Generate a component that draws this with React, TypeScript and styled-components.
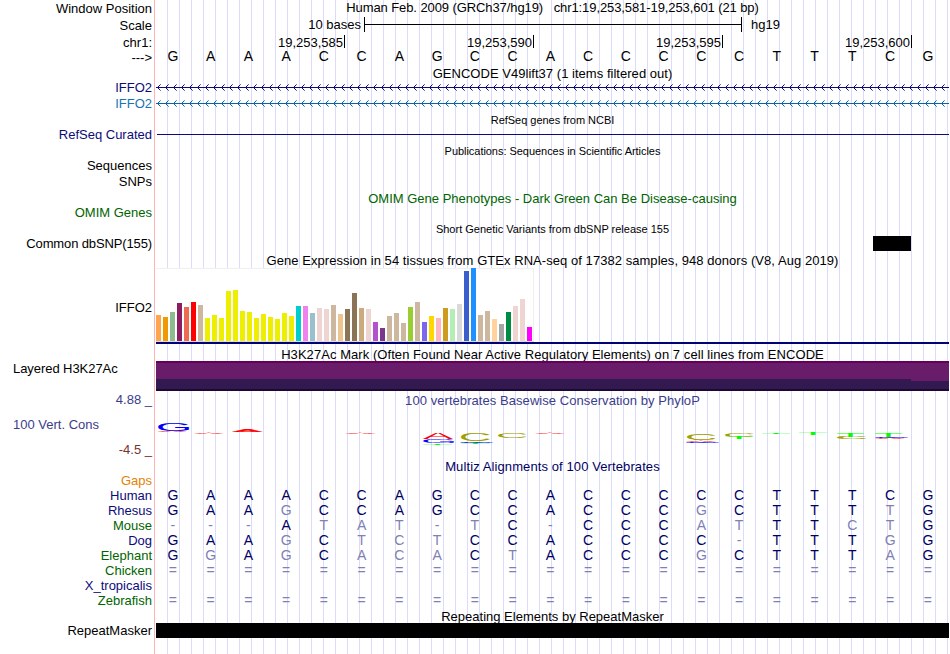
import React from "react";
import styled, { createGlobalStyle } from "styled-components";

const GlobalStyle = createGlobalStyle`
  body {
    margin: 0;
    background: #fff;
  }
`;

const NAVY = "#0c0c78";
const BLUE = "#1874b4";
const GREEN = "#006400";

interface Bar {
  height: number;
  color: string;
}

const tissues: Bar[] = [
  [26, "#ffa54f"], [24, "#ee9a00"], [29, "#8fbc8f"], [38, "#8b1c62"],
  [34, "#ee6a50"], [39, "#ff0000"], [36, "#cdb79e"], [23, "#eeee00"],
  [26, "#eeee00"], [23, "#eeee00"], [50, "#eeee00"], [51, "#eeee00"],
  [30, "#eeee00"], [29, "#eeee00"], [23, "#eeee00"], [27, "#eeee00"],
  [24, "#eeee00"], [22, "#eeee00"], [28, "#eeee00"], [25, "#eeee00"],
  [35, "#00cdcd"], [35, "#ee82ee"], [28, "#9ac0cd"], [33, "#eed5d2"],
  [32, "#eed5d2"], [36, "#cdb79e"], [27, "#eec591"], [32, "#8b7355"],
  [48, "#8b7355"], [33, "#cdaa7d"], [32, "#eed5d2"], [19, "#b452cd"],
  [13, "#7a378b"], [25, "#cdb79e"], [28, "#cdb79e"], [18, "#cdb79e"],
  [34, "#9acd32"], [39, "#cdb79e"], [19, "#7a67ee"], [25, "#ffd700"],
  [23, "#ffb6c1"], [33, "#cd9b1d"], [32, "#b4eeb4"], [37, "#d9d9d9"],
  [70, "#3a5fcd"], [73, "#1e90ff"], [26, "#cdb79e"], [30, "#cdb79e"],
  [22, "#ffd39b"], [17, "#a6a6a6"], [29, "#008b45"], [35, "#eed5d2"],
  [42, "#eed5d2"], [14, "#ff00ff"],
].map(([height, color]) => ({ height: Number(height), color: String(color) }));

// lower case marks a base that differs from human
const species = [
  { name: "Human", color: NAVY, bases: "GAAACCAGCCACCCCCTTTCG" },
  { name: "Rhesus", color: NAVY, bases: "GAAgCCAGCCACCCgCTTTtG" },
  { name: "Mouse", color: GREEN, bases: "---Atat-tC-CCCatTTctG" },
  { name: "Dog", color: NAVY, bases: "GAAgCtctCCACCCC-TTTgG" },
  { name: "Elephant", color: GREEN, bases: "GgAgCacaCtACCCgCTTTaG" },
  { name: "Chicken", color: GREEN, bases: "=====================" },
  { name: "X_tropicalis", color: NAVY, bases: "" },
  { name: "Zebrafish", color: GREEN, bases: "=====================" },
];

// ink box of each glyph, for a 100px font
const ink: any = {
  A: { left: 0.3, width: 66, height: 69 },
  C: { left: 5, width: 64, height: 71 },
  G: { left: 5, width: 66, height: 71 },
  T: { left: 2, width: 57, height: 69 },
};

const baseColor: any = { A: "#ff0000", C: "#a0a000", G: "#0000ff", T: "#00ff00" };

// [base, x, top, width, height]
const logo: [string, number, number, number, number][] = [
  ["G", 2, 423, 31, 8], ["A", 2, 431, 28, 1],
  ["A", 39, 433, 28, 1], ["A", 77, 430, 29, 2],
  ["A", 190, 433, 29, 1],
  ["A", 267, 433, 30, 6], ["G", 267, 439, 31, 4], ["T", 267, 443, 29, 1.5],
  ["C", 305, 433, 29, 8], ["G", 305, 441.5, 31, 1.5], ["T", 305, 443, 29, 1],
  ["C", 342, 433, 29, 5], ["A", 380, 433, 28, 1],
  ["C", 531, 433, 29, 7], ["A", 531, 440, 28, 1.5], ["G", 531, 442, 31, 1],
  ["C", 569, 433, 29, 4], ["T", 569, 437, 28, 2],
  ["T", 606, 433, 28, 1], ["T", 643, 433, 28, 2],
  ["T", 681, 433, 27, 4], ["C", 682, 437, 28, 2],
  ["T", 719, 433, 27, 4], ["G", 720, 437, 31, 1], ["A", 720, 438, 28, 1],
];

const Bases = ({ bases, plain = false }: any) => (
  <BaseGrid>
    {bases.split("").map((b: string, i: number) => (
      <Base key={i} $plain={plain} $match={/[A-Z]/.test(b)}>
        {b.toUpperCase()}
      </Base>
    ))}
  </BaseGrid>
);

const GeneLine = ({ color, y }: any) => (
  <Drawing width={793} height={14} shapeRendering="crispEdges">
    <rect x={0} y={y} width={793} height={1} fill={color} />
    {Array.from({ length: 99 }, (_, i) => i * 8 + 1).map((x) => (
      <g key={x} fill={color}>
        <rect x={x + 1} y={y - 1} width={1} height={3} />
        <rect x={x + 2} y={y - 2} width={1} height={1} />
        <rect x={x + 2} y={y + 2} width={1} height={1} />
        <rect x={x + 3} y={y - 3} width={1} height={1} opacity={0.6} />
        <rect x={x + 3} y={y + 3} width={1} height={1} opacity={0.6} />
      </g>
    ))}
  </Drawing>
);

const Logo = () => (
  <Drawing width={793} height={40} viewBox="0 415 793 40">
    {logo.map(([base, x, top, w, h], i) => {
      const box = ink[base];
      const sx = w / box.width;
      const sy = h / box.height;
      const flat = h <= 2 && base !== "T";
      return (
        <text
          key={i}
          fontSize={100}
          fill={baseColor[base]}
          stroke={flat ? baseColor[base] : "none"}
          strokeWidth={4}
          transform={`translate(${x - box.left * sx} ${top + h}) scale(${sx} ${sy})`}
        >
          {base}
        </text>
      );
    })}
  </Drawing>
);

const App = () => (
  <Page>
    <GlobalStyle />
    <Row $height={15}>
      <Label $top={2}>Window Position</Label>
      <Title $spacing={-0.09}>
        Human Feb. 2009 (GRCh37/hg19)&nbsp;&nbsp; chr1:19,253,581-19,253,601 (21 bp)
      </Title>
    </Row>
    <Row $height={19}>
      <Label $top={2}>Scale</Label>
      <Scale>
        <ScaleText $width={205}>10 bases</ScaleText>
        <ScaleBar />
        <ScaleText>hg19</ScaleText>
      </Scale>
    </Row>
    <Row $height={15}>
      <Label $top={2}>chr1:</Label>
      <Ruler>
        {["19,253,585", "19,253,590", "19,253,595", "19,253,600"].map((pos) => (
          <Tick key={pos}>{pos}</Tick>
        ))}
      </Ruler>
    </Row>
    <Row $height={17}>
      <Label>---&gt;</Label>
      <Bases bases="GAAACCAGCCACCCCCTTTCG" plain />
    </Row>
    <Row $height={14}>
      <Label />
      <Title $spacing={0.03}>GENCODE V49lift37 (1 items filtered out)</Title>
    </Row>
    <Row $height={14}>
      <Label $color={NAVY}>IFFO2</Label>
      <GeneLine color={NAVY} y={7} />
    </Row>
    <Row $height={18}>
      <Label $color={BLUE}>IFFO2</Label>
      <GeneLine color="#0c64a8" y={7} />
    </Row>
    <Row $height={15}>
      <Label />
      <Title $small $top={2} $spacing={-0.03}>
        RefSeq genes from NCBI
      </Title>
    </Row>
    <Row $height={14}>
      <Label $color={NAVY}>RefSeq Curated</Label>
      <Intron />
    </Row>
    <Row $height={18}>
      <Label />
      <Title $small $top={3} $spacing={-0.04}>
        Publications: Sequences in Scientific Articles
      </Title>
    </Row>
    <Row $height={13}>
      <Label>Sequences</Label>
    </Row>
    <Row $height={18}>
      <Label>SNPs</Label>
    </Row>
    <Row $height={17}>
      <Label />
      <Title $color={GREEN}>
        OMIM Gene Phenotypes - Dark Green Can Be Disease-causing
      </Title>
    </Row>
    <Row $height={11}>
      <Label $color={GREEN}>OMIM Genes</Label>
    </Row>
    <Row $height={18}>
      <Label />
      <Title $small $top={5}>
        Short Genetic Variants from dbSNP release 155
      </Title>
    </Row>
    <Row $height={15}>
      <Label $spacing={-0.13}>Common dbSNP(155)</Label>
      <Variant />
    </Row>
    <Row $height={17}>
      <Label />
      <Title $top={2} $spacing={0.05}>
        Gene Expression in 54 tissues from GTEx RNA-seq of 17382 samples, 948
        donors (V8, Aug 2019)
      </Title>
    </Row>
    <Row $height={76}>
      <Label $top={2}>IFFO2</Label>
      <Expression>
        <BarChart>
          {tissues.map((bar, i) => (
            <TissueBar key={i} $height={bar.height} $color={bar.color} />
          ))}
        </BarChart>
      </Expression>
    </Row>
    <Row $height={17}>
      <Label />
      <Title $top={3} $spacing={0.06}>
        H3K27Ac Mark (Often Found Near Active Regulatory Elements) on 7 cell
        lines from ENCODE
      </Title>
    </Row>
    <Row $height={30}>
      <SideLabels $top={0}>
        <SideLabel $spacing={-0.06}>Layered H3K27Ac</SideLabel>
      </SideLabels>
      <Signal>
        <SignalPart $width={755} $level={16} />
        <SignalPart $width={38} $level={18} />
      </Signal>
    </Row>
    <Row $height={67}>
      <SideLabels $top={1}>
        <SideLabel $color="#3c3c8c" $right>
          4.88 _
        </SideLabel>
        <SideLabel $color="#3c3c8c">100 Vert. Cons</SideLabel>
        <SideLabel $color="#783232" $right>
          -4.5 _
        </SideLabel>
      </SideLabels>
      <Conservation>
        <Title $color="#3c3c8c" $spacing={0.06}>
          100 vertebrates Basewise Conservation by PhyloP
        </Title>
        <Logo />
      </Conservation>
    </Row>
    <Row $height={16}>
      <Label />
      <Title $color="#000064" $top={1} $spacing={0.1}>
        Multiz Alignments of 100 Vertebrates
      </Title>
    </Row>
    <Row $height={13}>
      <Label $color="#e68200">Gaps</Label>
    </Row>
    <Species>
      {species.map((s) => (
        <Row key={s.name} $height={15}>
          <Label $color={s.color}>{s.name}</Label>
          <Bases bases={s.bases} />
        </Row>
      ))}
    </Species>
    <Row $height={15}>
      <Label />
      <Title $top={1}>Repeating Elements by RepeatMasker</Title>
    </Row>
    <Row $height={15}>
      <Label>RepeatMasker</Label>
      <Repeat />
    </Row>
  </Page>
);

export default App;

const Page = styled.div`
  width: 949px;
  height: 654px;
  overflow: hidden;
  font-family: "Liberation Sans", Arial, sans-serif;
  font-size: 13px;
  line-height: 15px;
  color: #000;
  white-space: nowrap;
  background:
    linear-gradient(#ffb4b4, #ffb4b4) 154px 0 / 1px 100% no-repeat,
    linear-gradient(#fff, #fff) 0 0 / 156px 100% no-repeat,
    linear-gradient(90deg, #dcdcfa 1px, transparent 1px) 167px 0 / 12px 100%;
`;

const Row = styled.div<{ $height: number }>`
  display: grid;
  grid-template-columns: 152px 793px;
  column-gap: 4px;
  align-items: center;
  align-content: center;
  height: ${(p) => p.$height}px;
`;

const Label = styled.div<{ $color?: string; $top?: number; $spacing?: number }>`
  text-align: right;
  padding-top: ${(p) => p.$top || 0}px;
  letter-spacing: ${(p) => p.$spacing || 0}px;
  color: ${(p) => p.$color || "#000"};
`;

const Title = styled.div<{
  $small?: boolean;
  $color?: string;
  $top?: number;
  $spacing?: number;
}>`
  text-align: center;
  font-size: ${(p) => (p.$small ? 11 : 13)}px;
  padding-top: ${(p) => p.$top || 0}px;
  letter-spacing: ${(p) => p.$spacing || 0}px;
  color: ${(p) => p.$color || "#000"};
`;

const Drawing = styled.svg`
  display: block;
`;

const Scale = styled.div`
  display: flex;
  align-items: center;
`;

const ScaleText = styled.div<{ $width?: number }>`
  width: ${(p) => (p.$width ? `${p.$width}px` : "auto")};
  text-align: right;
`;

const ScaleBar = styled.div`
  width: 376px;
  height: 15px;
  margin: 0 9px 0 3px;
  border: solid #000;
  border-width: 0 1px;
  background: linear-gradient(#000, #000) 0 7px / 100% 1px no-repeat;
`;

const Ruler = styled.div`
  display: flex;
`;

const Tick = styled.div`
  box-sizing: border-box;
  width: 189px;
  height: 13px;
  padding-right: 1px;
  border-right: 1px solid #000;
  line-height: 15px;
  text-align: right;
`;

const BaseGrid = styled.div`
  display: grid;
  grid-template-columns: repeat(21, 37.75px);
  margin-left: -2px;
  text-align: center;
`;

const Base = styled.span<{ $plain: boolean; $match: boolean }>`
  font-size: 14px;
  color: ${(p) => (p.$plain ? "#000" : p.$match ? "#000064" : "#8080b4")};
  padding-bottom: ${(p) => (p.$plain ? 3 : 0)}px;
`;

const Intron = styled.div`
  height: 1px;
  margin-left: 1px;
  background: ${NAVY};
`;

const Variant = styled.div`
  width: 38px;
  height: 15px;
  margin-left: 717px;
  background: #000;
`;

const Expression = styled.div`
  height: 74px;
  border-bottom: 2px solid #000078;
  background: linear-gradient(#fff, #fff) 0 0 / 378px 100% no-repeat;
`;

const BarChart = styled.div`
  box-sizing: border-box;
  display: flex;
  align-items: flex-end;
  gap: 2px;
  width: 378px;
  height: 74px;
  border-bottom: 1px solid #dcdcdc;
  box-shadow: inset -1px 1px #f0f0f0;
`;

const TissueBar = styled.div<{ $height: number; $color: string }>`
  width: 5px;
  height: ${(p) => p.$height}px;
  background: ${(p) => p.$color};
`;

const SideLabels = styled.div<{ $top: number }>`
  display: flex;
  flex-direction: column;
  align-self: start;
  gap: 9px;
  padding: ${(p) => p.$top}px 0 0 13px;
`;

const SideLabel = styled.div<{
  $color?: string;
  $right?: boolean;
  $spacing?: number;
}>`
  height: 16px;
  letter-spacing: ${(p) => p.$spacing || 0}px;
  color: ${(p) => p.$color || "#000"};
  text-align: ${(p) => (p.$right ? "right" : "left")};
`;

const Signal = styled.div`
  display: flex;
  height: 30px;
`;

const SignalPart = styled.div<{ $width: number; $level: number }>`
  box-sizing: border-box;
  width: ${(p) => p.$width}px;
  border-top: 2px solid #64005a;
  background: linear-gradient(
    #691c69 ${(p) => p.$level}px,
    #321950 ${(p) => p.$level}px 26px,
    #1c0832 26px
  );
`;

const Conservation = styled.div`
  align-self: start;
  display: flex;
  flex-direction: column;
  gap: 7px;
  padding-top: 2px;
`;

const Species = styled.div`
  padding-top: 1px;
`;

const Repeat = styled.div`
  height: 15px;
  background: #000;
`;
